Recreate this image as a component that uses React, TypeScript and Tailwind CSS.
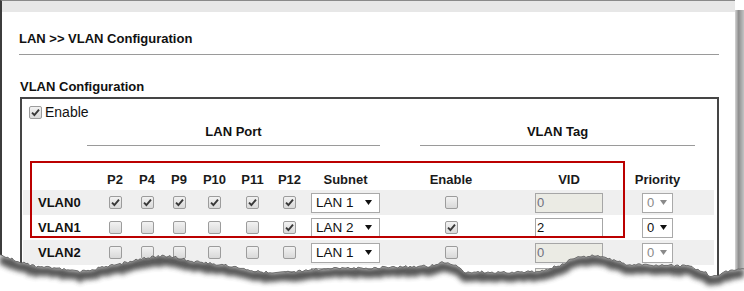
import React from "react";

type Row = {
  name: string;
  ports: number[];
  subnet: string;
  enable: boolean;
  vid: string;
  disabled: boolean;
};

const rows: Row[] = [
  { name: "VLAN0", ports: [1, 1, 1, 1, 1, 1], subnet: "LAN 1", enable: false, vid: "0", disabled: true },
  { name: "VLAN1", ports: [0, 0, 0, 0, 0, 1], subnet: "LAN 2", enable: true, vid: "2", disabled: false },
  { name: "VLAN2", ports: [0, 0, 0, 0, 0, 0], subnet: "LAN 1", enable: false, vid: "0", disabled: true },
  { name: "VLAN3", ports: [0, 0, 0, 0, 0, 0], subnet: "LAN 1", enable: false, vid: "0", disabled: true },
];

const ports = ["P2", "P4", "P9", "P10", "P11", "P12"];

function Check({ checked }: { checked: boolean }) {
  return (
    <span className="inline-flex w-[13px] h-[13px] rounded-[2px] border border-[#9c9c9c] bg-[linear-gradient(#f2f2f2,#d9d9d9)] items-center justify-center">
      {checked && (
        <svg width="11" height="11" viewBox="0 0 11 11">
          <path d="M2 5.6 L4.4 8 L9 2.6" fill="none" stroke="#383838" strokeWidth="1.9" strokeLinejoin="miter" />
        </svg>
      )}
    </span>
  );
}

function Arrow({ color }: { color: string }) {
  return (
    <svg width="7" height="5" viewBox="0 0 7 5">
      <polygon points="0,0 7,0 3.5,5" fill={color} />
    </svg>
  );
}

const keys: [number, number][] = [
  [0, 256], [10, 258], [20, 262], [35, 266], [55, 268], [80, 272], [100, 268], [120, 264], [140, 259],
  [158, 256], [175, 257], [190, 261], [210, 263], [230, 266], [250, 270], [270, 273], [300, 271],
  [330, 268], [370, 268], [400, 267], [430, 266], [445, 262], [455, 265], [465, 272], [500, 272],
  [540, 272], [560, 265], [575, 258], [595, 255], [610, 259], [625, 264], [660, 265], [690, 266],
  [705, 272], [712, 277], [720, 274], [735, 269], [744, 268],
];

function interp(x: number) {
  for (let i = 0; i < keys.length - 1; i++) {
    const [x0, y0] = keys[i];
    const [x1, y1] = keys[i + 1];
    if (x >= x0 && x <= x1) return y0 + ((y1 - y0) * (x - x0)) / (x1 - x0);
  }
  return keys[keys.length - 1][1];
}

function tear() {
  const pts: [number, number][] = [];
  for (let x = 0; x <= 744; x += 2) {
    const j = Math.sin(x * 12.9898) * 43758.5453;
    const r = j - Math.floor(j);
    pts.push([x, interp(x) + (r - 0.5) * 2.6]);
  }
  const line = pts.map((p, i) => `${i ? "L" : "M"}${p[0]},${p[1].toFixed(1)}`).join(" ");
  const shifted = pts.map((p, i) => `${i ? "L" : "M"}${p[0]},${(p[1] + 4.5).toFixed(1)}`).join(" ");
  const area = `M0,291 ` + pts.map((p) => `L${p[0]},${p[1].toFixed(1)}`).join(" ") + ` L744,291 Z`;
  return { line, shifted, area };
}

const cols = "grid grid-cols-[76px_32px_32px_32px_39px_37px_37px_75px_136px_100px_77px_18px]";

export default function App() {
  const t = tear();
  return (
    <div className="relative w-[744px] h-[291px] overflow-hidden bg-white text-[#111] font-['Liberation_Sans',Arial,sans-serif]">
      <div className="flex">
        <div className="w-[735px] h-[291px] border-l-2 border-l-[#3c3c3c] border-t border-t-[#8a8a8a]">
          <div className="h-[11px] bg-[#e7e7e7]" />
          <div className="pl-[17px] pr-[16px]">
            <div className="mt-[19px] text-[13px] leading-[16px] font-bold">LAN &gt;&gt; VLAN Configuration</div>
            <div className="mt-[7px] h-px bg-[#9a9a9a]" />
            <div className="mt-[24px] pl-[1px] text-[13px] leading-[16px] font-bold">VLAN Configuration</div>
            <div className="mt-[2px] ml-[1px] w-[699px] h-[200px] border-2 border-[#454545]">
              <div className="mt-[6px] ml-[7px] flex items-center gap-[3px] h-[14px]">
                <Check checked />
                <span className="text-[14px] leading-[14px]">Enable</span>
              </div>
              <div className="flex ml-[65px] mt-[5px] text-[13px] leading-[16px] font-bold">
                <div className="w-[293px] text-center pb-[5px] border-b border-[#9a9a9a]">LAN Port</div>
                <div className="ml-[40px] w-[275px] text-center pb-[5px] border-b border-[#9a9a9a]">VLAN Tag</div>
              </div>
              <div className="ml-[1px] w-[691px] text-[13px]">
                <div className={`${cols} h-[44px] items-end pb-[2px] font-bold leading-[16px] text-[#1a1a1a]`}>
                  <div />
                  {ports.map((p) => (
                    <div key={p} className="text-center">{p}</div>
                  ))}
                  <div className="text-center">Subnet</div>
                  <div className="text-center">Enable</div>
                  <div className="text-center">VID</div>
                  <div className="text-center">Priority</div>
                  <div />
                </div>
                {rows.map((r, i) => (
                  <div key={r.name} className={`${cols} h-[25px] items-center ${i % 2 === 0 ? "bg-[#efefef]" : "bg-white"}`}>
                    <div className="pl-[15px] font-bold">{r.name}</div>
                    {r.ports.map((c, k) => (
                      <div key={k} className="flex justify-center">
                        <Check checked={!!c} />
                      </div>
                    ))}
                    <div className="flex justify-center">
                      <div className="w-[69px] h-[20px] bg-white border border-[#a9a9a9] flex items-center justify-between pl-[4px] pr-[7px] text-[13.5px] leading-[18px]">
                        <span>{r.subnet}</span>
                        <Arrow color="#111" />
                      </div>
                    </div>
                    <div className="flex justify-center">
                      <Check checked={r.enable} />
                    </div>
                    <div className="flex justify-center">
                      <div
                        className={`w-[68px] h-[20px] border border-[#a6a6a6] pl-[1px] leading-[18px] ${
                          r.disabled ? "bg-[#ebebe4] text-[#707080]" : "bg-white text-[#111]"
                        }`}
                      >
                        {r.vid}
                      </div>
                    </div>
                    <div className="flex justify-center">
                      <div
                        className={`w-[31px] h-[20px] bg-white border border-[#a9a9a9] flex items-center justify-between pl-[4px] pr-[5px] leading-[18px] ${
                          r.disabled ? "text-[#8a8a8a]" : "text-[#111]"
                        }`}
                      >
                        <span>0</span>
                        <Arrow color={r.disabled ? "#8a8a8a" : "#111"} />
                      </div>
                    </div>
                    <div />
                  </div>
                ))}
              </div>
            </div>
          </div>
        </div>
        <div className="w-[9px] mt-[10px] h-[281px] bg-[linear-gradient(to_right,#d6d6d6,#8e8e8e_40%,#a9a9a9_70%,#c4c4c4)]" />
      </div>

      <div className="absolute left-[30px] top-[161px] w-[595px] h-[77px] border-2 border-[#bb0000]" />

      <svg className="absolute left-0 top-0 pointer-events-none" width="744" height="291">
        <defs>
          <filter id="tearBlur" x="-5%" y="-100%" width="110%" height="300%">
            <feGaussianBlur stdDeviation="2.4" />
          </filter>
          <clipPath id="below">
            <path d={t.area} />
          </clipPath>
        </defs>
        <path d={t.area} fill="#ffffff" />
        <g clipPath="url(#below)">
          <path d={t.shifted} fill="none" stroke="#454545" strokeWidth="9" filter="url(#tearBlur)" opacity="0.9" />
        </g>
        <path d={t.line} fill="none" stroke="#555" strokeWidth="0.8" />
      </svg>
    </div>
  );
}
